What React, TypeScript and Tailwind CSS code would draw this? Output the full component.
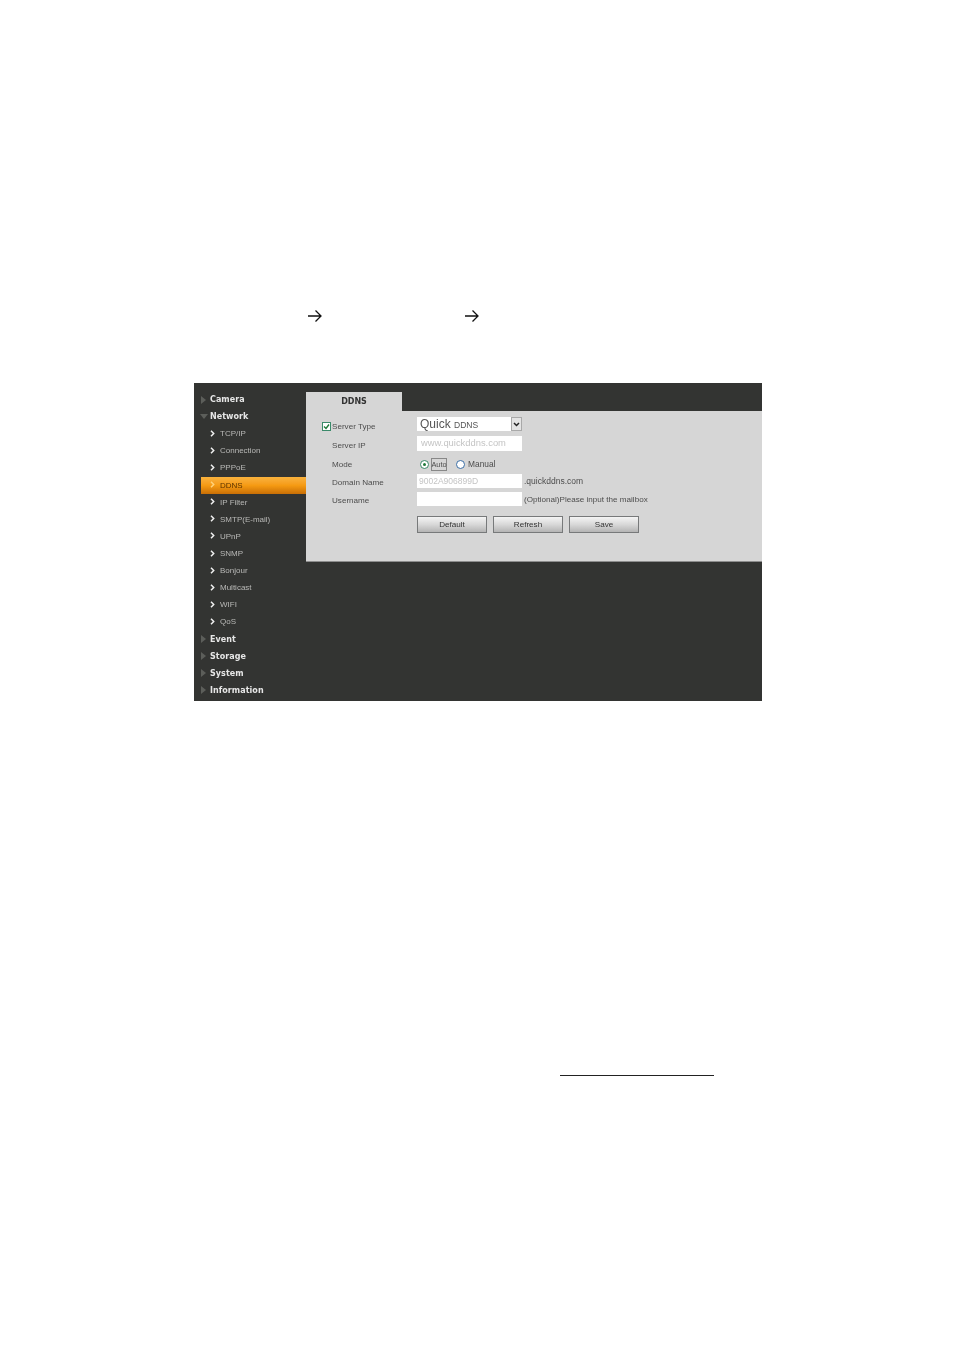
const subItems = ["TCP/IP", "Connection", "PPPoE", "DDNS", "IP Filter", "SMTP(E-mail)", "UPnP", "SNMP", "Bonjour", "Multicast", "WIFI", "QoS"];
const bottomItems = ["Event", "Storage", "System", "Information"];

function Arrow() {
  return (
    <svg width="16" height="14" viewBox="0 0 16 14" fill="none" stroke="#111" strokeWidth="1.3">
      <path d="M1 7h13M8.5 1.5 14 7l-5.500 5.500" />
    </svg>
  );
}

function TopItem({ label, open }: { label: string; open?: boolean }) {
  return (
    <div className="flex h-[17.12px] items-center">
      <div className="flex w-[16px] justify-center pl-[5px] pr-[2px]">
        {open ? (
          <div className="h-0 w-0 border-x-[4px] border-t-[5px] border-x-transparent border-t-[#5c5e5a]" />
        ) : (
          <div className="h-0 w-0 border-y-[4px] border-l-[5px] border-y-transparent border-l-[#5c5e5a]" />
        )}
      </div>
      <span className="pt-[1px] text-[8px] font-bold tracking-[0.05px] text-[#e6e6e6] [font-family:'DejaVu_Sans',sans-serif]">{label}</span>
    </div>
  );
}

function SubItem({ label }: { label: string }) {
  const active = label === "DDNS";
  return (
    <div
      className={
        active
          ? "ml-[7px] flex h-[17.12px] items-center bg-gradient-to-b from-[#f9b23c] via-[#f59a12] to-[#c96f06] pl-[9px]"
          : "ml-[7px] flex h-[17.12px] items-center pl-[9px]"
      }
    >
      <svg width="5" height="7" viewBox="0 0 5 7" fill="none" stroke={active ? "#ffd27a" : "#f0f0f0"} strokeWidth="1.5" className="-mt-[1px]">
        <path d="M1 .8 3.700 3.500 1 6.200" />
      </svg>
      <span className={active ? "ml-[5px] pt-[1px] text-[8px] text-[#5a3300]" : "ml-[5px] pt-[1px] text-[8px] text-[#b9b9b7]"}>{label}</span>
    </div>
  );
}

function Field({ label, check, top = "pt-[3px]", children }: { label: string; check?: boolean; top?: string; children: React.ReactNode }) {
  return (
    <div className="flex items-start">
      <div className={"flex w-[111px] items-center pl-[16px] " + top}>
        <div className="flex w-[10px]">
          {check && (
            <div className="flex h-[9px] w-[9px] items-center justify-center border border-[#3b8a6a] bg-white">
              <svg width="7" height="7" viewBox="0 0 7 7" fill="none" stroke="#1f7a3a" strokeWidth="1.400">
                <path d="M1 3.500 3 5.500 6 1.500" />
              </svg>
            </div>
          )}
        </div>
        <span className="text-[8.1px] leading-[11px] text-[#4d4d4d]">{label}</span>
      </div>
      {children}
    </div>
  );
}

function Btn({ label }: { label: string }) {
  return (
    <div className="flex h-[17px] w-[70px] items-center justify-center border border-[#77797a] bg-gradient-to-b from-[#f4f4f4] via-[#d8d8d8] to-[#b4b4b4] pt-[1px] text-[8.1px] text-[#333]">
      {label}
    </div>
  );
}

export default function App() {
  return (
    <div className="h-[1350px] w-[954px] bg-white [font-family:'Liberation_Sans',sans-serif]">
      {/* arrows of the text line, words are missing in the scan */}
      <div className="flex pl-[307px] pt-[309px]">
        <Arrow />
        <div className="ml-[141px]">
          <Arrow />
        </div>
      </div>

      <div className="ml-[194px] mt-[60px] flex h-[318px] w-[568px] bg-[#333432] blur-[0.5px]">
        {/* side menu */}
        <div className="w-[112px] shrink-0 pt-[8px]">
          <TopItem label="Camera" />
          <TopItem label="Network" open />
          {subItems.map((s) => (
            <SubItem key={s} label={s} />
          ))}
          {bottomItems.map((s) => (
            <TopItem key={s} label={s} />
          ))}
        </div>

        {/* content */}
        <div className="flex-1 pt-[9px]">
          <div className="flex h-[19px] w-[96px] items-center justify-center bg-[#d6d6d6] pt-[1px] text-[8px] font-bold text-[#333] [font-family:'DejaVu_Sans',sans-serif]">
            DDNS
          </div>
          <div className="flex h-[151px] flex-col border-b border-[#8d8d8d] bg-[#d6d6d6] pt-[6px]">
            <Field label="Server Type" check top="pt-[4px]">
              <div className="flex h-[14px] w-[105px] items-center justify-between bg-white pl-[3px]">
                <span className="text-[12px] leading-none text-[#555]">
                  Quick <span className="text-[8.5px]">DDNS</span>
                </span>
                <div className="flex h-[14px] w-[11px] items-center justify-center border border-[#a9a9a9] bg-[#e4e4e4]">
                  <svg width="7" height="5" viewBox="0 0 7 5" fill="none" stroke="#222" strokeWidth="1.500">
                    <path d="M1 1 3.500 3.500 6 1" />
                  </svg>
                </div>
              </div>
            </Field>
            <div className="mt-[4px]">
              <Field label="Server IP" top="pt-[4px]">
                <div className="flex h-[15px] w-[105px] items-center bg-white pl-[4px] text-[9.4px] text-[#c4c4c4]">www.quickddns.com</div>
              </Field>
            </div>
            <div className="mt-[5px]">
              <Field label="Mode">
                <div className="flex h-[17px] items-center pl-[3px] text-[8.100px] text-[#4d4d4d]">
                  <div className="flex h-[9px] w-[9px] items-center justify-center rounded-full border border-[#3b8a6a] bg-white">
                    <div className="h-[3px] w-[3px] rounded-full bg-[#1f7a3a]" />
                  </div>
                  <span className="ml-[2px] flex w-[16px] justify-center border border-[#888] text-[7.4px]">Auto</span>
                  <div className="ml-[9px] h-[9px] w-[9px] rounded-full border border-[#3a6ea5] bg-white" />
                  <span className="ml-[3px] text-[8.4px]">Manual</span>
                </div>
              </Field>
            </div>
            <div className="mt-[1px]">
              <Field label="Domain Name">
                <div className="flex h-[14px] w-[105px] items-center bg-white pl-[2px] text-[8.5px] text-[#c4c4c4]">9002A906899D</div>
                <span className="ml-[2px] pt-[2px] text-[8.5px] leading-[11px] text-[#4d4d4d]">.quickddns.com</span>
              </Field>
            </div>
            <div className="mt-[4px]">
              <Field label="Username">
                <div className="h-[14px] w-[105px] bg-white" />
                <span className="ml-[2px] pt-[2px] text-[8.1px] leading-[11px] text-[#4d4d4d]">(Optional)Please input the mailbox</span>
              </Field>
            </div>
            <div className="ml-[111px] mt-[10px] flex gap-[6px]">
              <Btn label="Default" />
              <Btn label="Refresh" />
              <Btn label="Save" />
            </div>
          </div>
        </div>
      </div>

      {/* footnote rule */}
      <div className="ml-[560px] mt-[374px] h-px w-[154px] bg-[#222]" />
    </div>
  );
}
